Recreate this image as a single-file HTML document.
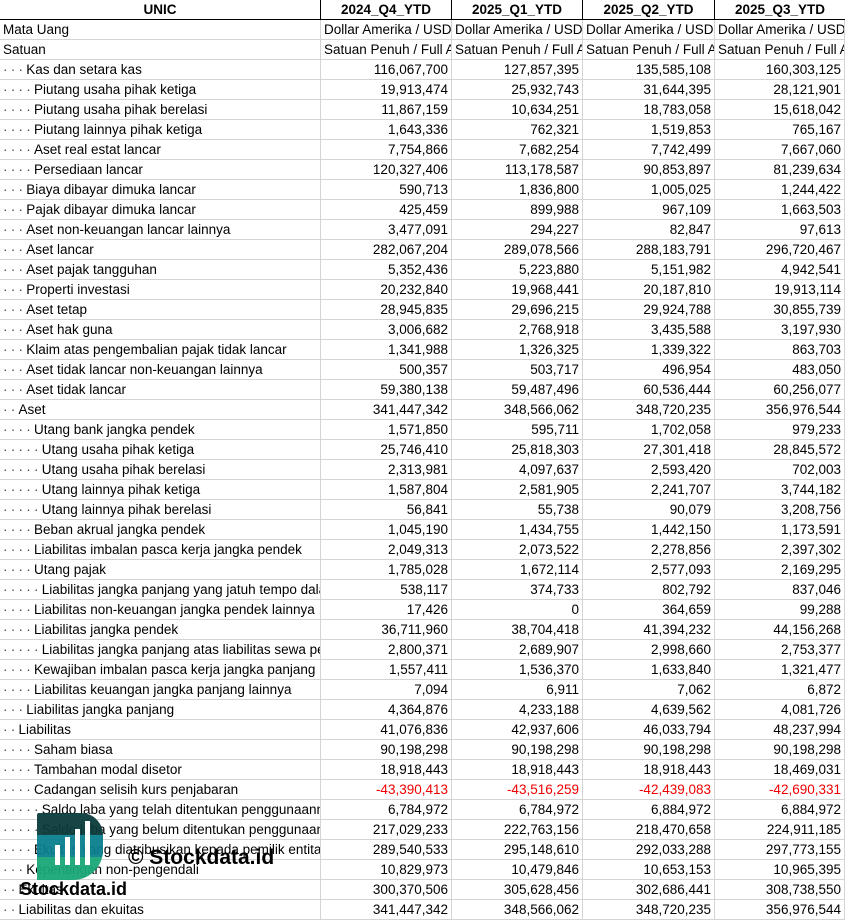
<!DOCTYPE html>
<html><head><meta charset="utf-8"><style>
body{margin:0;width:845px;height:921px;overflow:hidden;background:#fff;font-family:"Liberation Sans",sans-serif;font-size:13.5px;color:#000;position:relative}
.r{position:absolute;left:0;width:845px;height:20px;border-bottom:1px solid #d4d4d4;box-sizing:border-box}
.c{position:absolute;top:0;height:19px;line-height:20px;white-space:nowrap;overflow:hidden;border-right:1px solid #d4d4d4;box-sizing:border-box;padding:0 3px}
.c0{left:0;width:321px}.c1{left:321px;width:131px}.c2{left:452px;width:131px}.c3{left:583px;width:132px}.c4{left:715px;width:130px}
.n{text-align:right}
.h .c{font-weight:bold;text-align:center;border-right:1px solid #000}
.h{border-bottom:1px solid #000}
.neg .n{color:#e00}
.d{color:#444;word-spacing:-0.5px}
</style></head><body>
<div id="t"></div>
<script>
var rows=[
["Mata Uang",-1,"Dollar Amerika / USD","Dollar Amerika / USD","Dollar Amerika / USD","Dollar Amerika / USD"],
["Satuan",-1,"Satuan Penuh / Full Amount","Satuan Penuh / Full Amount","Satuan Penuh / Full Amount","Satuan Penuh / Full Amount"],
["Kas dan setara kas",3,"116,067,700","127,857,395","135,585,108","160,303,125"],
["Piutang usaha pihak ketiga",4,"19,913,474","25,932,743","31,644,395","28,121,901"],
["Piutang usaha pihak berelasi",4,"11,867,159","10,634,251","18,783,058","15,618,042"],
["Piutang lainnya pihak ketiga",4,"1,643,336","762,321","1,519,853","765,167"],
["Aset real estat lancar",4,"7,754,866","7,682,254","7,742,499","7,667,060"],
["Persediaan lancar",4,"120,327,406","113,178,587","90,853,897","81,239,634"],
["Biaya dibayar dimuka lancar",3,"590,713","1,836,800","1,005,025","1,244,422"],
["Pajak dibayar dimuka lancar",3,"425,459","899,988","967,109","1,663,503"],
["Aset non-keuangan lancar lainnya",3,"3,477,091","294,227","82,847","97,613"],
["Aset lancar",3,"282,067,204","289,078,566","288,183,791","296,720,467"],
["Aset pajak tangguhan",3,"5,352,436","5,223,880","5,151,982","4,942,541"],
["Properti investasi",3,"20,232,840","19,968,441","20,187,810","19,913,114"],
["Aset tetap",3,"28,945,835","29,696,215","29,924,788","30,855,739"],
["Aset hak guna",3,"3,006,682","2,768,918","3,435,588","3,197,930"],
["Klaim atas pengembalian pajak tidak lancar",3,"1,341,988","1,326,325","1,339,322","863,703"],
["Aset tidak lancar non-keuangan lainnya",3,"500,357","503,717","496,954","483,050"],
["Aset tidak lancar",3,"59,380,138","59,487,496","60,536,444","60,256,077"],
["Aset",2,"341,447,342","348,566,062","348,720,235","356,976,544"],
["Utang bank jangka pendek",4,"1,571,850","595,711","1,702,058","979,233"],
["Utang usaha pihak ketiga",5,"25,746,410","25,818,303","27,301,418","28,845,572"],
["Utang usaha pihak berelasi",5,"2,313,981","4,097,637","2,593,420","702,003"],
["Utang lainnya pihak ketiga",5,"1,587,804","2,581,905","2,241,707","3,744,182"],
["Utang lainnya pihak berelasi",5,"56,841","55,738","90,079","3,208,756"],
["Beban akrual jangka pendek",4,"1,045,190","1,434,755","1,442,150","1,173,591"],
["Liabilitas imbalan pasca kerja jangka pendek",4,"2,049,313","2,073,522","2,278,856","2,397,302"],
["Utang pajak",4,"1,785,028","1,672,114","2,577,093","2,169,295"],
["Liabilitas jangka panjang yang jatuh tempo dalam satu tahun",5,"538,117","374,733","802,792","837,046"],
["Liabilitas non-keuangan jangka pendek lainnya",4,"17,426","0","364,659","99,288"],
["Liabilitas jangka pendek",4,"36,711,960","38,704,418","41,394,232","44,156,268"],
["Liabilitas jangka panjang atas liabilitas sewa pembiayaan",5,"2,800,371","2,689,907","2,998,660","2,753,377"],
["Kewajiban imbalan pasca kerja jangka panjang",4,"1,557,411","1,536,370","1,633,840","1,321,477"],
["Liabilitas keuangan jangka panjang lainnya",4,"7,094","6,911","7,062","6,872"],
["Liabilitas jangka panjang",3,"4,364,876","4,233,188","4,639,562","4,081,726"],
["Liabilitas",2,"41,076,836","42,937,606","46,033,794","48,237,994"],
["Saham biasa",4,"90,198,298","90,198,298","90,198,298","90,198,298"],
["Tambahan modal disetor",4,"18,918,443","18,918,443","18,918,443","18,469,031"],
["Cadangan selisih kurs penjabaran",4,"-43,390,413","-43,516,259","-42,439,083","-42,690,331"],
["Saldo laba yang telah ditentukan penggunaannya",5,"6,784,972","6,784,972","6,884,972","6,884,972"],
["Saldo laba yang belum ditentukan penggunaannya",5,"217,029,233","222,763,156","218,470,658","224,911,185"],
["Ekuitas yang diatribusikan kepada pemilik entitas induk",4,"289,540,533","295,148,610","292,033,288","297,773,155"],
["Kepentingan non-pengendali",3,"10,829,973","10,479,846","10,653,153","10,965,395"],
["Ekuitas",2,"300,370,506","305,628,456","302,686,441","308,738,550"],
["Liabilitas dan ekuitas",2,"341,447,342","348,566,062","348,720,235","356,976,544"]];
var h='<div class="r h" style="top:0"><div class="c c0">UNIC</div><div class="c c1">2024_Q4_YTD</div><div class="c c2">2025_Q1_YTD</div><div class="c c3">2025_Q2_YTD</div><div class="c c4" style="border-right:none">2025_Q3_YTD</div></div>';
rows.forEach(function(r,i){
 var top=20+i*20, neg=r[2].charAt(0)=='-';
 var dots=r[1]>0?'<span class="d">'+Array(r[1]+1).join('· ')+'</span>':'';
 var cls=r[1]<0?'c':'c n';
 h+='<div class="r'+(neg?' neg':'')+'" style="top:'+top+'px"><div class="c c0">'+dots+r[0]+'</div>';
 for(var k=1;k<=4;k++)h+='<div class="'+cls+' c'+k+'">'+r[k+1]+'</div>';
 h+='</div>';
});
document.getElementById('t').innerHTML=h;
</script>
<div style="position:absolute;left:37px;top:813px;width:66px;height:67px;overflow:hidden;border-radius:2px 22px 30px 0;opacity:.95">
<div style="height:22px;background:#0b3b3b"></div>
<div style="height:22px;background:#0a7f8f"></div>
<div style="height:23px;background:#1aa878"></div>
</div>
<svg style="position:absolute;left:37px;top:813px" width="66" height="67"><g fill="#fff"><rect x="18" y="32" width="5" height="20"/><rect x="28" y="24" width="5" height="28"/><rect x="38" y="16" width="5" height="36"/><rect x="48" y="8" width="5" height="44"/></g></svg>
<div style="position:absolute;left:128px;top:846px;font-weight:bold;font-size:21px;color:#000">© Stockdata.id</div>
<div style="position:absolute;left:20px;top:879px;font-weight:bold;font-size:18px;color:#000">Stockdata.id</div>
</body></html>
